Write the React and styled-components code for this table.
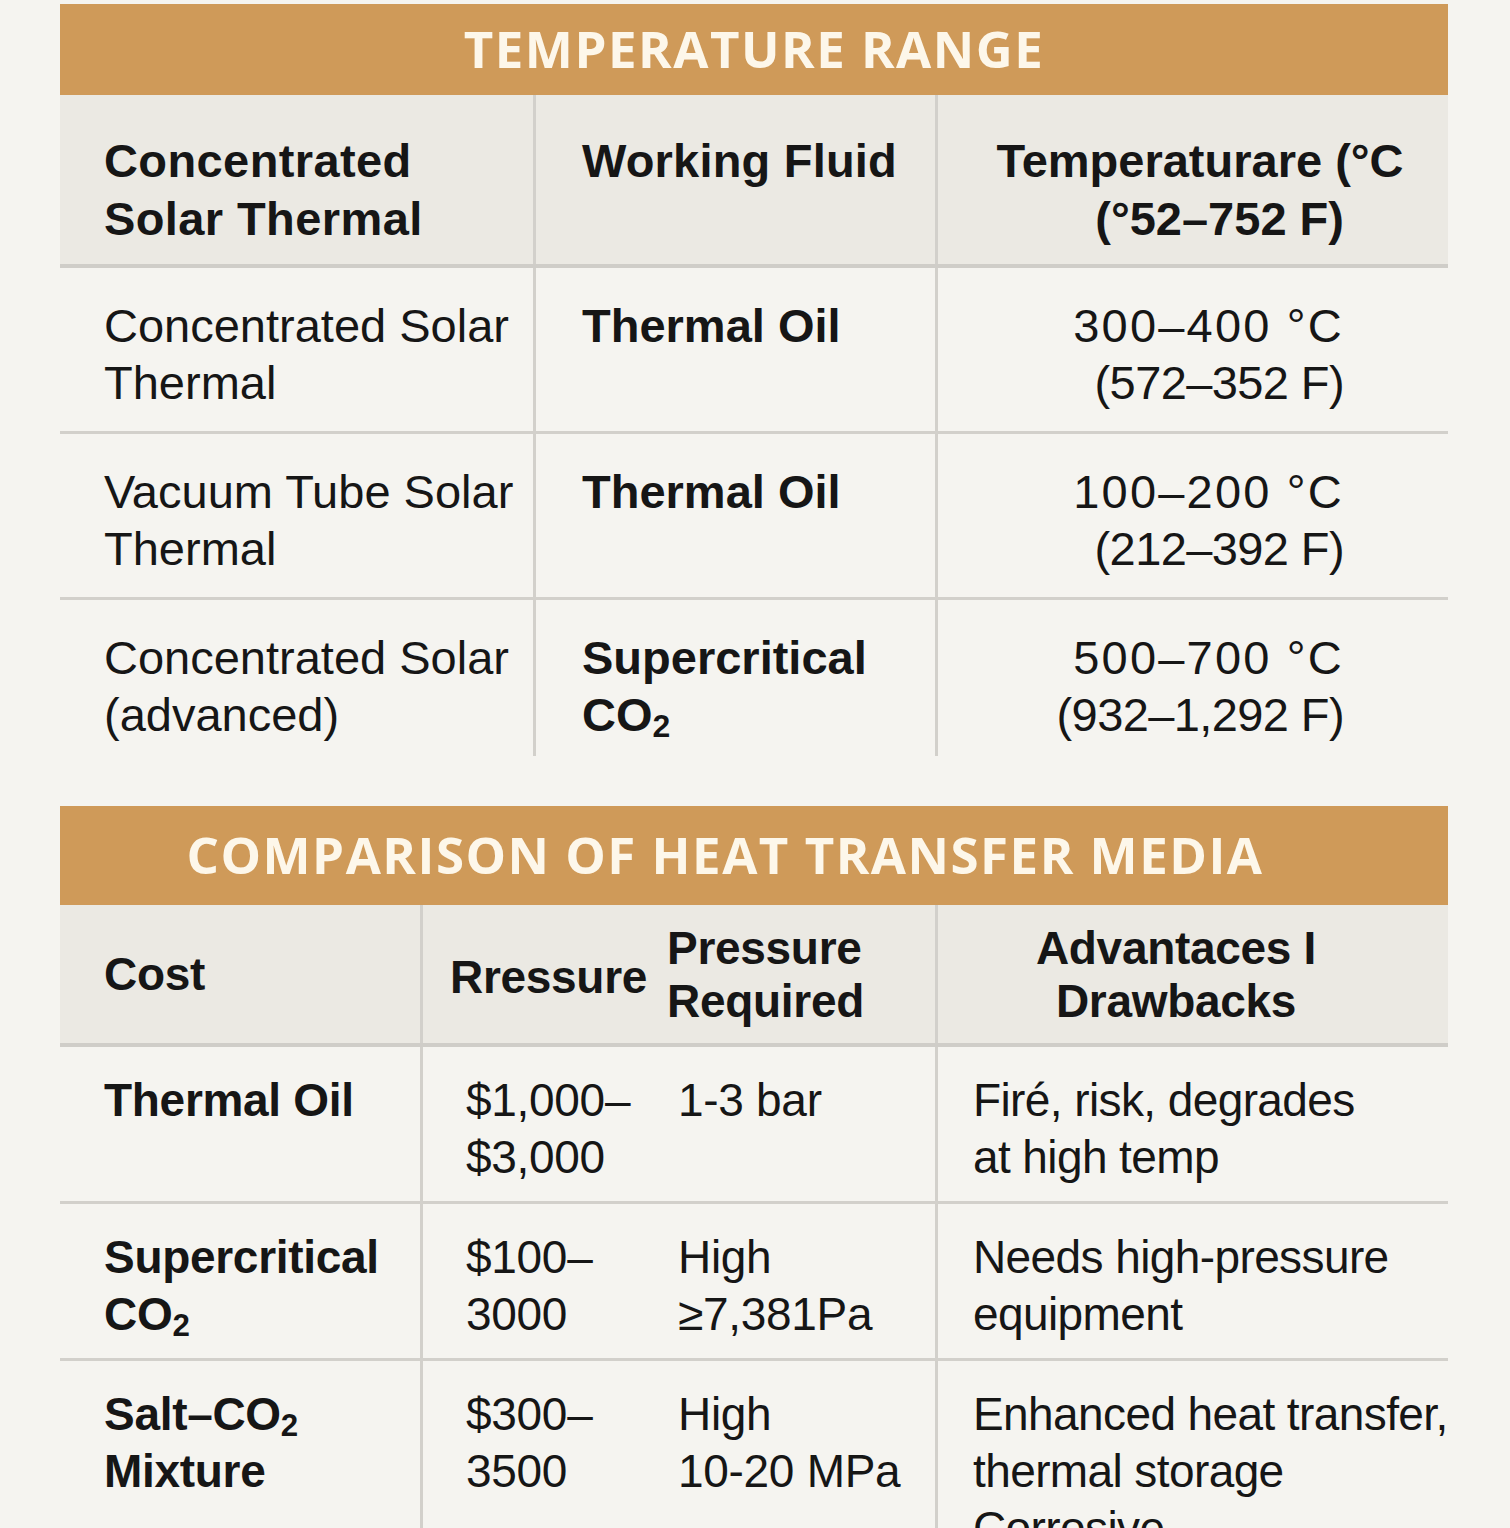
import React from "react"
import styled, { createGlobalStyle, css } from "styled-components"

const GlobalStyle = createGlobalStyle`
	html, body {
		margin: 0;
		padding: 0;
		background: #f5f4f0;
	}
	body {
		font-family: "Liberation Sans", Arial, sans-serif;
		color: #161616;
		overflow: hidden;
	}
	* {
		box-sizing: border-box;
	}
`

const LINE = "#d2d0cb"

/**
 * Page wrapper.
 */
const Page = styled.main`
	width: 1510px;
	padding: 4px 62px 0 60px;
	display: flex;
	flex-direction: column;
	gap: 50px;
`

const Section = styled.section`
	display: flex;
	flex-direction: column;
`

const TitleBar = styled.h2`
	margin: 0;
	height: ${ props => props.$h }px;
	display: flex;
	align-items: center;
	justify-content: center;
	background: #cf9a59;
	color: #fdf7ea;
	font-family: "Open Sans", "Liberation Sans", sans-serif;
	font-weight: 700;
	font-size: 51px;
	letter-spacing: 1.5px;
	text-transform: uppercase;
	padding: 0 ${ props => props.$offset || 0 }px 4px 0;
`

const Row = styled.div`
	display: grid;
	grid-template-columns: ${ props => props.$cols };
	border-bottom: ${ props => props.$last ? "none" : `3px solid ${ LINE }` };
	${ props => props.$head && css`
		background: #ebe9e3;
		border-bottom: 4px solid #cfcdc8;
		align-items: ${ props.$center ? "center" : "start" };
	` }
`

const Cell = styled.div`
	font-size: ${ props => props.$fs || 46 }px;
	letter-spacing: ${ props => props.$ls ?? -0.3 }px;
	line-height: ${ props => props.$lh || 58 }px;
	font-weight: ${ props => props.$bold ? 700 : 400 };
	text-align: ${ props => props.$align || "left" };
	padding: ${ props => props.$pad };
	align-self: stretch;
	display: flex;
	flex-direction: column;
	justify-content: ${ props => props.$center ? "center" : "flex-start" };
	border-right: ${ props => props.$divider ? `3px solid ${ LINE }` : "none" };
	white-space: nowrap;
`

const Line = styled.span`
	letter-spacing: ${ props => props.$ls ?? "inherit" };
`

const Sub = styled.sub`
	font-size: 0.68em;
	vertical-align: -0.18em;
	line-height: 0;
`

const CO2 = () => <>CO<Sub>2</Sub></>

const Lines = ( { items, spacing = [] } ) => items.map( ( item, i ) => (
	<Line key={ i } $ls={ spacing[ i ] }>{ item }</Line>
) )

const TEMP_COLS = "476px 402px 510px"

const tempRows = [
	{ name: [ "Concentrated Solar", "Thermal" ], fluid: [ "Thermal Oil" ], range: [ "300–400 °C", "(572–352 F)" ] },
	{ name: [ "Vacuum Tube Solar", "Thermal" ], fluid: [ "Thermal Oil" ], range: [ "100–200 °C", "(212–392 F)" ] },
	{ name: [ "Concentrated Solar", "(advanced)" ], fluid: [ "Supercritical", <CO2 key="c" /> ], range: [ "500–700 °C", "(932–1,292 F)" ] },
]

const TemperatureTable = () => (
	<Section>
		<TitleBar $h={ 91 }>Temperature Range</TitleBar>
		<Row $cols={ TEMP_COLS } $head>
			<Cell $bold $fs={ 47 } $ls={ 0.4 } $divider $pad="37px 0 16px 44px">
				<span>Concentrated</span>
				<span>Solar Thermal</span>
			</Cell>
			<Cell $bold $fs={ 47 } $ls={ 0.2 } $divider $pad="37px 0 16px 46px">
				<span>Working Fluid</span>
			</Cell>
			<Cell $bold $fs={ 47 } $ls={ 0 } $align="center" $pad="37px 0 16px 14px">
				<span>Temperaturare (°C</span>
				<span>&nbsp;&nbsp;&nbsp;(°52–752 F)</span>
			</Cell>
		</Row>
		{ tempRows.map( ( row, i ) => {
			const last = i === tempRows.length - 1
			const pad = last ? "29px 0 13px" : "29px 0 20px"
			return (
				<Row key={ i } $cols={ TEMP_COLS } $last={ last }>
					<Cell $fs={ 47 } $ls={ 0 } $lh={ 57 } $divider $pad={ `${ pad } 44px` }><Lines items={ row.name } /></Cell>
					<Cell $fs={ 47 } $ls={ 0 } $lh={ 57 } $bold $divider $pad={ `${ pad } 46px` }><Lines items={ row.fluid } /></Cell>
					<Cell $fs={ 47 } $ls={ 0 } $lh={ 57 } $align="right" $pad={ pad.replace( / 0 /, " 104px " ) }>
						<Lines items={ row.range } spacing={ [ "2.2px", "-0.6px" ] } />
					</Cell>
				</Row>
			)
		} ) }
	</Section>
)

const MEDIA_COLS = "363px 244px 271px 510px"

const mediaRows = [
	{ name: [ "Thermal Oil" ], cost: [ "$1,000–", "$3,000" ], pressure: [ "1-3 bar" ], notes: [ "Firé, risk, degrades", "at high temp" ] },
	{ name: [ "Supercritical", <CO2 key="c" /> ], cost: [ "$100–", "3000" ], pressure: [ "High", "≥7,381Pa" ], notes: [ "Needs high-pressure", "equipment" ] },
	{ name: [ <React.Fragment key="s">Salt–<CO2 /></React.Fragment>, "Mixture" ], cost: [ "$300–", "3500" ], pressure: [ "High", "10-20 MPa" ], notes: [ "Enhanced heat transfer,", "thermal storage", "Corrosive" ] },
]

const MediaTable = () => (
	<Section>
		<TitleBar $h={ 99 } $offset={ 58 }>Comparison of Heat Transfer Media</TitleBar>
		<Row $cols={ MEDIA_COLS } $head $center>
			<Cell $bold $divider $center $lh={ 53 } $pad="0 0 0 44px">Cost</Cell>
			<Cell $bold $center $lh={ 53 } $pad="6px 0 0 27px">Rressure</Cell>
			<Cell $bold $divider $center $lh={ 53 } $pad="17px 0 15px 0">
				<span>Pressure</span>
				<span>Required</span>
			</Cell>
			<Cell $bold $center $align="center" $lh={ 53 } $pad="17px 34px 15px 0">
				<span>Advantaces I</span>
				<span>Drawbacks</span>
			</Cell>
		</Row>
		{ mediaRows.map( ( row, i ) => (
			<Row key={ i } $cols={ MEDIA_COLS } $last={ i === mediaRows.length - 1 }>
				<Cell $bold $divider $lh={ 57 } $pad="25px 0 15px 44px"><Lines items={ row.name } /></Cell>
				<Cell $lh={ 57 } $pad="25px 0 15px 43px"><Lines items={ row.cost } /></Cell>
				<Cell $divider $lh={ 57 } $pad="25px 0 15px 11px"><Lines items={ row.pressure } /></Cell>
				<Cell $ls={ -0.6 } $lh={ 57 } $pad="25px 0 15px 35px"><Lines items={ row.notes } /></Cell>
			</Row>
		) ) }
	</Section>
)

const App = () => (
	<>
		<GlobalStyle />
		<Page>
			<TemperatureTable />
			<MediaTable />
		</Page>
	</>
)

export default App
